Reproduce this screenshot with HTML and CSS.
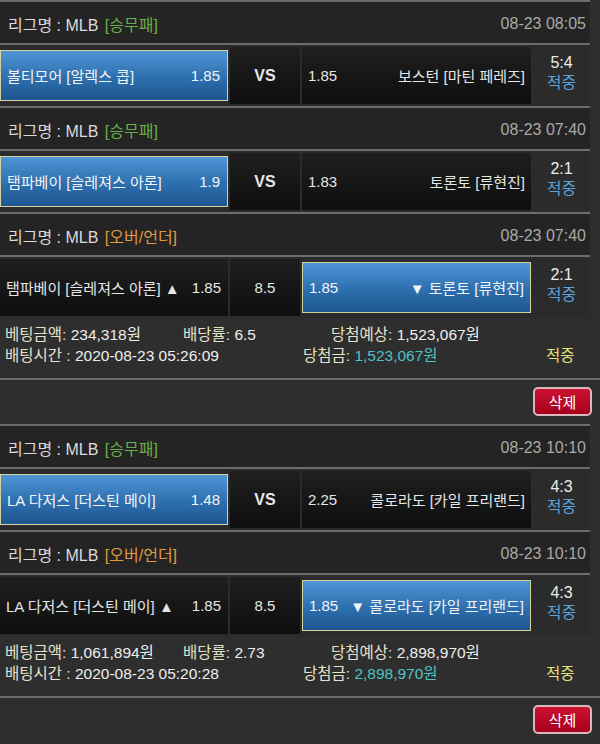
FILE: index.html
```html
<!DOCTYPE html>
<html lang="ko">

<head>
    <meta charset="UTF-8">
    <meta name="viewport" content="width=device-width, initial-scale=1.0">
    <title>배팅내역</title>
    <link rel="stylesheet" href="styles.css">
</head>

<body>
    <div class="bet">
        <div class="game">
            <div class="game-head">
                <span class="league">리그명 : MLB <span class="type wdl">[승무패]</span></span>
                <span class="date">08-23 08:05</span>
            </div>
            <div class="game-row">
                <div class="cell home picked"><span class="team">볼티모어 [알렉스 콥]</span><span class="odd">1.85</span></div>
                <div class="cell mid"><b>VS</b></div>
                <div class="cell away"><span class="odd">1.85</span><span class="team">보스턴 [마틴 페레즈]</span></div>
                <div class="score"><div>5:4</div><div class="hit">적중</div></div>
            </div>
        </div>

        <div class="game">
            <div class="game-head">
                <span class="league">리그명 : MLB <span class="type wdl">[승무패]</span></span>
                <span class="date">08-23 07:40</span>
            </div>
            <div class="game-row">
                <div class="cell home picked"><span class="team">탬파베이 [슬레져스 아론]</span><span class="odd">1.9</span></div>
                <div class="cell mid"><b>VS</b></div>
                <div class="cell away"><span class="odd">1.83</span><span class="team">토론토 [류현진]</span></div>
                <div class="score"><div>2:1</div><div class="hit">적중</div></div>
            </div>
        </div>

        <div class="game">
            <div class="game-head">
                <span class="league">리그명 : MLB <span class="type ou">[오버/언더]</span></span>
                <span class="date">08-23 07:40</span>
            </div>
            <div class="game-row">
                <div class="cell home"><span class="team">탬파베이 [슬레져스 아론] ▲</span><span class="odd">1.85</span></div>
                <div class="cell mid">8.5</div>
                <div class="cell away picked"><span class="odd">1.85</span><span class="team">▼ 토론토 [류현진]</span></div>
                <div class="score"><div>2:1</div><div class="hit">적중</div></div>
            </div>
        </div>

        <div class="summary">
            <div class="line top">
                <span class="c1"><span class="lbl">베팅금액:</span> 234,318원</span>
                <span class="c2"><span class="lbl">배당률:</span> 6.5</span>
                <span><span class="lbl">당첨예상:</span> 1,523,067원</span>
            </div>
            <div class="line bottom">
                <span class="c1"><span class="lbl">배팅시간 :</span> 2020-08-23 05:26:09</span>
                <span class="c2"><span class="lbl">당첨금:</span> <span class="won">1,523,067원</span></span>
                <span class="result">적중</span>
            </div>
        </div>
        <div class="actions"><button class="btn-del">삭제</button></div>
    </div>

    <div class="bet">
        <div class="game">
            <div class="game-head">
                <span class="league">리그명 : MLB <span class="type wdl">[승무패]</span></span>
                <span class="date">08-23 10:10</span>
            </div>
            <div class="game-row">
                <div class="cell home picked"><span class="team">LA 다저스 [더스틴 메이]</span><span class="odd">1.48</span></div>
                <div class="cell mid"><b>VS</b></div>
                <div class="cell away"><span class="odd">2.25</span><span class="team">콜로라도 [카일 프리랜드]</span></div>
                <div class="score"><div>4:3</div><div class="hit">적중</div></div>
            </div>
        </div>

        <div class="game">
            <div class="game-head">
                <span class="league">리그명 : MLB <span class="type ou">[오버/언더]</span></span>
                <span class="date">08-23 10:10</span>
            </div>
            <div class="game-row">
                <div class="cell home"><span class="team">LA 다저스 [더스틴 메이] ▲</span><span class="odd">1.85</span></div>
                <div class="cell mid">8.5</div>
                <div class="cell away picked"><span class="odd">1.85</span><span class="team">▼ 콜로라도 [카일 프리랜드]</span></div>
                <div class="score"><div>4:3</div><div class="hit">적중</div></div>
            </div>
        </div>

        <div class="summary">
            <div class="line top">
                <span class="c1"><span class="lbl">베팅금액:</span> 1,061,894원</span>
                <span class="c2"><span class="lbl">배당률:</span> 2.73</span>
                <span><span class="lbl">당첨예상:</span> 2,898,970원</span>
            </div>
            <div class="line bottom">
                <span class="c1"><span class="lbl">배팅시간 :</span> 2020-08-23 05:20:28</span>
                <span class="c2"><span class="lbl">당첨금:</span> <span class="won">2,898,970원</span></span>
                <span class="result">적중</span>
            </div>
        </div>
        <div class="actions"><button class="btn-del">삭제</button></div>
    </div>
</body>

</html>
```

FILE: styles.css
```css
html,
body {
    margin: 0;
    padding: 0;
    background: #2e2e2e;
    color: #e8e8e8;
    font-family: "Liberation Sans", "Noto Sans CJK KR", sans-serif;
    font-size: 15.5px;
}

.game {
    width: 590px;
    border-top: 2px solid #6c6c6c;
    background: #2b2b2b;
}

.game-head {
    height: 43px;
    display: flex;
    align-items: center;
    justify-content: space-between;
    padding: 2px 4px 0 8px;
    box-sizing: border-box;
    background: #242424;
    border-bottom: 2px solid #6c6c6c;
    color: #dcdcdc;
    font-size: 16px;
}

.game-head .type {
    margin-left: 2px;
}

.type.wdl {
    color: #6aae4a;
}

.type.ou {
    color: #e0993c;
}

.game-head .date {
    color: #a9a9a9;
}

.game-row {
    height: 61px;
    box-sizing: border-box;
    padding: 2px 0;
    display: flex;
    gap: 2px;
    font-size: 15px;
}

.cell {
    height: 57px;
    box-sizing: border-box;
    display: flex;
    align-items: center;
    justify-content: space-between;
    background: linear-gradient(#1f1f1f, #0e0e0e);
    color: #e6e6e6;
}

.cell.home {
    width: 228px;
    padding: 0 7px 0 6px;
}

.cell.mid {
    width: 70px;
    justify-content: center;
}

.cell.mid b {
    font-size: 16px;
}

.cell.away {
    width: 229px;
    padding: 0 6px;
}

.cell.picked {
    height: 51px;
    margin: 3px 0;
    background: linear-gradient(#4f95d6, #2d6fae 55%, #1d5690);
    border: 1px solid #d6d2a0;
    color: #f4f4f4;
}

.score {
    width: 57px;
    padding-bottom: 6px;
    box-sizing: border-box;
    display: flex;
    flex-direction: column;
    justify-content: center;
    align-items: center;
    line-height: 20px;
    font-size: 16px;
    color: #ececec;
}

.score .hit {
    color: #5ca2dc;
}

.summary {
    height: 62px;
    box-sizing: border-box;
    padding: 6px 0 0 5px;
    border-bottom: 2px solid #6c6c6c;
    line-height: 21px;
    color: #eeeeee;
}

.summary .line {
    display: flex;
}

.summary .top .c1 {
    width: 178px;
}

.summary .top .c2 {
    width: 148px;
}

.summary .bottom .c1 {
    width: 298px;
}

.summary .bottom .c2 {
    width: 243px;
}

.summary .lbl {
    color: #e6e2c8;
}

.summary .won {
    color: #4fc2c4;
}

.summary .result {
    color: #e6e07a;
}

.actions {
    height: 44px;
    box-sizing: border-box;
    padding: 7px 8px 0 0;
    display: flex;
    justify-content: flex-end;
}

.btn-del {
    width: 59px;
    height: 29px;
    padding: 0;
    border: 2px solid #d8b8bc;
    border-radius: 5px;
    background: linear-gradient(#cc1230, #a5001c);
    color: #fff;
    font-family: inherit;
    font-size: 15px;
}
```
